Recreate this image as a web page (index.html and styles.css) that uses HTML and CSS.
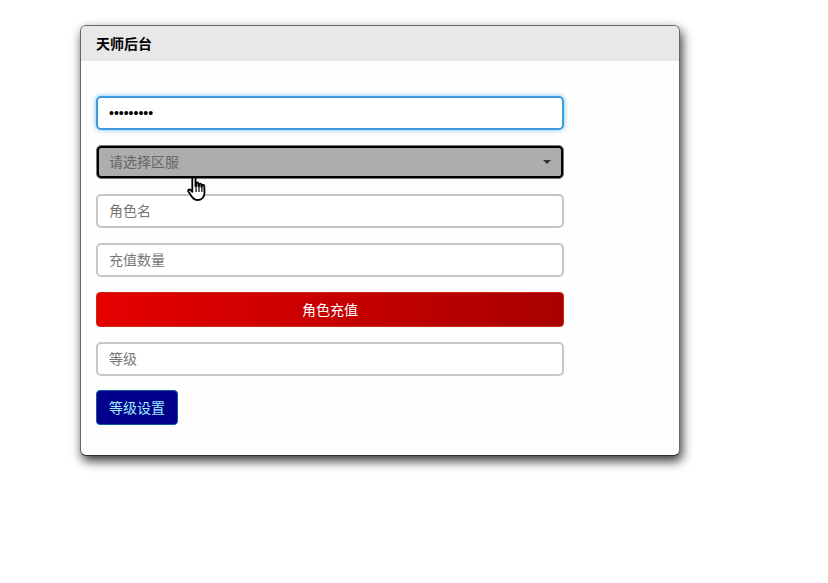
FILE: index.html
```html
<!DOCTYPE html>
<html lang="zh-CN">
	<head>
		<meta charset="UTF-8" />
		<meta name="viewport" content="width=device-width, initial-scale=1.0" />
		<title>天师后台</title>
		<link rel="stylesheet" href="styles.css">
	</head>
	<body>
		<div class="panel">
			<div class="panel-heading">天师后台</div>
			<div class="panel-body">
				<input class="field field-focus" type="password" value="123456789" />
				<div class="field field-select">
					<span class="select-text">请选择区服</span>
					<span class="caret"></span>
					<svg class="hand" width="20" height="26" viewBox="0 0 20 26">
						<path d="M6.5 1.5c1-.6 2-.1 2 1.1v7.6l.6-.1V7.700c0-1.600 2.200-1.600 2.300 0v2.600l.6 0V8.700c0-1.500 2.200-1.500 2.300 0v2l.6 0V9.800c0-1.400 2.300-1.400 2.400.2l.2 6.600c.1 3.800-2.400 7.400-6.400 7.400-3.200 0-5-1.300-6.400-3.500L1.400 15.600c-.9-1.500 1-2.800 2.200-1.600l1.700 1.800V2.800c0-.6.500-1 1.200-1.300z" fill="#fff" stroke="#000" stroke-width="1.800" stroke-linejoin="round"/>
						<path d="M9.100 11v5M12 11v5M14.900 11v5" stroke="#000" stroke-width="1.200" fill="none"/>
					</svg>
				</div>
				<input class="field" type="text" placeholder="角色名" />
				<input class="field" type="text" placeholder="充值数量" />
				<button class="btn btn-red"><span class="btn-label">角色充值</span></button>
				<input class="field" type="text" placeholder="等级" />
				<button class="btn btn-navy"><span class="btn-label">等级设置</span></button>
			</div>
		</div>
	</body>
</html>
```

FILE: styles.css
```css
/* Page and panel */
html {
	height: 100%;
}
body {
	margin: 0;
	min-height: 100%;
	box-sizing: border-box;
	padding: 25px 0 0 80px;
	background-color: #fff;
	font-family: "Liberation Sans", "Noto Sans CJK SC", sans-serif;
	font-size: 14px;
}
.panel {
	width: 600px;
	height: 431px;
	box-sizing: border-box;
	background-color: #fefefe;
	border-radius: 6px;
	border: 1px solid #666;
	border-bottom-color: #333;
	box-shadow: 2px 5px 11px rgba(0, 0, 0, 0.8);
}
.panel-heading {
	height: 35px;
	line-height: 36px;
	padding-left: 15px;
	background-color: #e8e8e8;
	border-radius: 5px 5px 0 0;
	font-size: 14px;
	font-weight: bold;
	color: #000;
}
.panel-body {
	display: flex;
	flex-direction: column;
	align-items: flex-start;
	gap: 15px;
	padding: 35px 15px 0;
}

/* Inputs */
.field {
	width: 468px;
	height: 34px;
	box-sizing: border-box;
	padding: 0 11px;
	border: 2px solid #c6c6c6;
	border-radius: 5px;
	background-color: #fff;
	font-family: inherit;
	font-size: 14px;
	color: #000;
	outline: none;
}
.field::placeholder {
	color: #777;
	opacity: 1;
}
.field-focus {
	border-color: #3d9be0;
	box-shadow: 0 0 5px rgba(60, 160, 240, 0.7);
}
.field-select {
	position: relative;
	display: flex;
	align-items: center;
	justify-content: space-between;
	padding: 0 12px;
	background-color: #adadad;
	border: 1px solid #777;
	box-shadow: inset 0 0 0 2px #000;
	color: #666;
}
.select-text {
	margin-top: -2px;
}
.caret {
	width: 0;
	height: 0;
	margin-top: -1px;
	border-left: 4px solid transparent;
	border-right: 4px solid transparent;
	border-top: 4px solid #333;
}
.hand {
	position: absolute;
	left: 90px;
	top: 30px;
}

/* Buttons */
.btn {
	height: 35px;
	padding: 0;
	border-radius: 4px;
	font-family: inherit;
	font-size: 14px;
	cursor: pointer;
}
.btn-label {
	position: relative;
	top: -1px;
}
.btn-red {
	width: 468px;
	border: 1px solid #c8280a;
	background: linear-gradient(to right, #e60000, #a80000);
	color: #fff;
}
.btn-navy {
	width: 82px;
	margin-top: -1px;
	border: 1px solid #0a5aa8;
	background-color: #00008b;
	color: #9fefff;
}
```
